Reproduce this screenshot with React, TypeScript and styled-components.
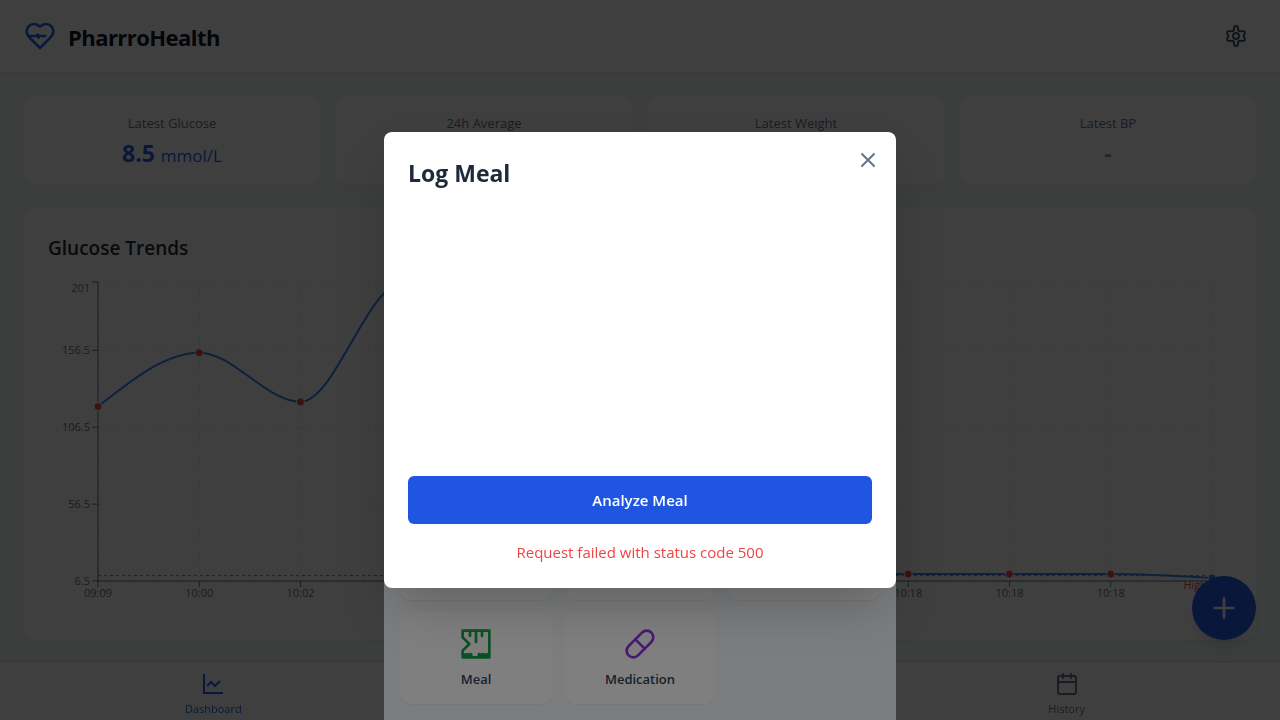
import React, { useLayoutEffect, useRef, useState } from 'react';
import styled, { createGlobalStyle } from 'styled-components';

const GlobalStyle = createGlobalStyle`
  *, *::before, *::after { box-sizing: border-box; }
  body {
    margin: 0;
    font-family: 'Segoe UI', 'Open Sans', 'Noto Sans', sans-serif;
    font-size: 15px;
    line-height: 24px;
    color: #0f172a;
    background: #f1f8f5;
  }
  h1, h2, h3, p { margin: 0; }
  button { font: inherit; border: 0; padding: 0; cursor: pointer; }
`;

const Page = styled.div`
  min-height: 100vh;
  display: flex;
  flex-direction: column;
`;

const Header = styled.header`
  display: flex;
  align-items: center;
  justify-content: space-between;
  height: 72px;
  padding: 0 24px;
  background: #fff;
  box-shadow: 0 1px 2px rgba(0, 0, 0, 0.06);
`;

const Brand = styled.div`
  display: flex;
  align-items: center;
  gap: 12px;
  color: #2563eb;
`;

const BrandName = styled.h1`
  padding-top: 2px;
  font-size: 22px;
  line-height: 32px;
  font-weight: 700;
  letter-spacing: -0.025em;
  color: #0f172a;
`;

const IconButton = styled.button`
  display: flex;
  padding: 8px;
  border-radius: 50%;
  background: transparent;
  color: #475569;
`;

const Main = styled.main`
  display: flex;
  flex-direction: column;
  gap: 24px;
  padding: 24px 24px 80px;
`;

const Stats = styled.section`
  display: grid;
  grid-template-columns: repeat(4, 1fr);
  gap: 16px;
`;

const Card = styled.section`
  background: #fff;
  border-radius: 12px;
  box-shadow: 0 1px 2px rgba(0, 0, 0, 0.05);
`;

const StatCard = styled(Card)`
  padding: 16px;
  text-align: center;
`;

const StatLabel = styled.p`
  font-size: 13px;
  line-height: 22px;
  color: #64748b;
`;

const StatValue = styled.p<{ $tone: string }>`
  margin-top: 4px;
  font-size: 23px;
  line-height: 30px;
  font-weight: 700;
  color: ${(p) => p.$tone};
`;

const StatUnit = styled.span`
  font-size: 17px;
  line-height: 20px;
  font-weight: 400;
`;

const ChartCard = styled(Card)`
  padding: 24px;
`;

const ChartTitle = styled.h2`
  margin-bottom: 12px;
  font-size: 19px;
  line-height: 32px;
  font-weight: 600;
  color: #1e293b;
`;

const ChartBox = styled.div`
  height: 340px;
  svg { display: block; width: 100%; height: 100%; }
  text { font-size: 11px; fill: #64748b; }
  text.limit { fill: #ef4444; }
`;

const Nav = styled.nav`
  position: fixed;
  inset: auto 0 0 0;
  display: grid;
  grid-template-columns: repeat(3, 1fr);
  padding: 9px 0 2px;
  border-top: 1px solid #e2e8f0;
  background: #fff;
  box-shadow: 0 -1px 3px rgba(0, 0, 0, 0.1);
`;

const NavItem = styled.a<{ $active?: boolean; $column: number }>`
  grid-column: ${(p) => p.$column};
  display: flex;
  flex-direction: column;
  align-items: center;
  gap: 4px;
  font-size: 11px;
  line-height: 18px;
  text-decoration: none;
  color: ${(p) => (p.$active ? '#2563eb' : '#64748b')};
`;

const AddButton = styled.button`
  position: fixed;
  right: 24px;
  bottom: 80px;
  display: flex;
  align-items: center;
  justify-content: center;
  width: 64px;
  height: 64px;
  border-radius: 50%;
  background: #2563eb;
  color: #fff;
  box-shadow: 0 10px 15px -3px rgba(0, 0, 0, 0.1), 0 4px 6px -4px rgba(0, 0, 0, 0.1);
`;

const Overlay = styled.div<{ $align: string }>`
  position: fixed;
  inset: 0;
  display: flex;
  align-items: ${(p) => p.$align};
  justify-content: center;
  background: rgba(0, 0, 0, 0.5);
`;

const Sheet = styled.div`
  display: grid;
  grid-template-columns: repeat(3, 1fr);
  gap: 12px;
  width: 100%;
  max-width: 512px;
  padding: 16px;
  border-radius: 16px 16px 0 0;
  background: #f8fafc;
`;

const SheetAction = styled.button<{ $tone?: string }>`
  display: flex;
  flex-direction: column;
  align-items: center;
  gap: 8px;
  min-height: 92px;
  padding: 16px 16px 14px;
  border-radius: 12px;
  background: #fff;
  color: ${(p) => p.$tone ?? '#2563eb'};
  box-shadow: 0 1px 2px rgba(0, 0, 0, 0.05);
`;

const ActionLabel = styled.span`
  font-size: 13px;
  line-height: 22px;
  font-weight: 600;
  color: #334155;
`;

const Modal = styled.div`
  position: relative;
  display: flex;
  flex-direction: column;
  width: 100%;
  max-width: 512px;
  padding: 24px;
  border-radius: 8px;
  background: #fff;
  box-shadow: 0 25px 50px -12px rgba(0, 0, 0, 0.25);
`;

const ModalTitle = styled.h2`
  font-size: 23px;
  line-height: 34px;
  font-weight: 700;
  color: #1e293b;
`;

const CloseButton = styled.button`
  position: absolute;
  top: 16px;
  right: 16px;
  display: flex;
  background: transparent;
  color: #64748b;
`;

const ModalContent = styled.div`
  height: 286px;
`;

const PrimaryButton = styled.button`
  height: 48px;
  border-radius: 6px;
  background: #1f55e0;
  color: #fff;
  font-weight: 600;
`;

const ErrorText = styled.p`
  margin-top: 16px;
  text-align: center;
  color: #ef4444;
`;

function Icon({ size = 24, children }: { size?: number; children: React.ReactNode }) {
  return (
    <svg width={size} height={size} viewBox="0 0 24 24" fill="none" stroke="currentColor"
      strokeWidth="2" strokeLinecap="round" strokeLinejoin="round" aria-hidden="true">
      {children}
    </svg>
  );
}

const HeartIcon = () => (
  <Icon size={32}>
    <path d="M19 14c1.49-1.46 3-3.21 3-5.5A5.5 5.5 0 0 0 16.5 3c-1.76 0-3 .5-4.5 2-1.5-1.5-2.74-2-4.5-2A5.5 5.5 0 0 0 2 8.5c0 2.3 1.5 4.05 3 5.5l7 7Z" />
    <path strokeWidth="1.8" d="M4 12h5.5l.8-.8.6 1.600.8-.8h4.300" />
    <path strokeWidth="1.8" d="M10.300 10.800v.7M10.900 12.500v.8" />
  </Icon>
);

const GearIcon = () => (
  <Icon>
    <path d="M12 2a2 2 0 0 0-2 2v1.300a2 2 0 0 1-2.400 2L5.400 7A1.900 1.900 0 0 0 3.200 9.500c.2.9 1.100 1.400 1.100 2.500s-.9 1.600-1.100 2.500a1.900 1.900 0 0 0 2.200 2.500l2.200-.3a2 2 0 0 1 2.400 2V20a2 2 0 0 0 4 0v-1.300a2 2 0 0 1 2.400-2l2.200.3a1.900 1.900 0 0 0 2.200-2.500c-.2-.9-1.100-1.400-1.100-2.500s.9-1.600 1.100-2.500A1.900 1.900 0 0 0 18.600 7l-2.200.3A2 2 0 0 1 14 5.300V4a2 2 0 0 0-2-2z" />
    <circle cx="12" cy="12" r="3" />
  </Icon>
);

const ChartIcon = () => (
  <Icon>
    <path strokeLinecap="butt" strokeLinejoin="miter" d="M3 2v19h19" />
    <path strokeLinecap="butt" strokeLinejoin="miter" d="m19 9-5 5-4-4-4 4" />
  </Icon>
);

const CalendarIcon = () => (
  <Icon>
    <rect x="3" y="4" width="18" height="18" rx="2" />
    <path d="M16 2v4M8 2v4M3 10h18" />
  </Icon>
);

const PlusIcon = () => (
  <Icon size={32}>
    <path d="M5 12h14M12 5v14" />
  </Icon>
);

const CloseIcon = () => (
  <Icon>
    <path d="M18 6 6 18M6 6l12 12" />
  </Icon>
);

const MealIcon = () => (
  <Icon size={32}>
    <path d="M2 22v-5l5-5-5-5V2h20v20H2" />
    <path d="M7.500 2v4M12 2v8.500M16.500 2v4" />
    <path strokeWidth="2.400" d="M2.500 19.800l1.500.8 1.500-.8 1.500.8 1.200-.8v1.700M14.300 21.500v-1.700l1.200.8 1.500-.8 1.500.8 1.500-.8 1.500.8" />
  </Icon>
);

const PillIcon = () => (
  <Icon size={32}>
    <path d="m10.5 20.5 10-10a4.95 4.95 0 1 0-7-7l-10 10a4.95 4.95 0 1 0 7 7Z" />
    <path d="m8.5 8.5 7 7" />
  </Icon>
);

const HIGH_LIMIT = 10;
const DOMAIN: [number, number] = [6.5, 201];
const Y_TICKS = [201, 156.5, 106.5, 56.5, 6.5];
const READINGS = [
  { time: '09:09', value: 120 },
  { time: '10:00', value: 155 },
  { time: '10:02', value: 123 },
  { time: '', value: 200 },
  { time: '', value: 11 },
  { time: '', value: 11 },
  { time: '', value: 11 },
  { time: '', value: 11 },
  { time: '10:18', value: 11 },
  { time: '10:18', value: 11 },
  { time: '10:18', value: 11 },
  { time: '', value: 8.5 },
];

type Point = { x: number; y: number };

/* Cubic curve that never overshoots between neighbouring points. */
function monotonePath(points: Point[]): string {
  const last = points.length - 1;
  const slopes = points.slice(1).map((p, i) => (p.y - points[i].y) / (p.x - points[i].x));
  const tangents = points.map((_, i) => {
    if (i === 0 || i === last) return 0;
    const a = slopes[i - 1];
    const b = slopes[i];
    if (a * b <= 0) return 0;
    return Math.sign(a) * Math.min(Math.abs(a), Math.abs(b), Math.abs(a + b) / 4) * 2;
  });
  tangents[0] = (3 * slopes[0] - tangents[1]) / 2;
  tangents[last] = (3 * slopes[last - 1] - tangents[last - 1]) / 2;
  return points.slice(1).reduce((d, p, i) => {
    const from = points[i];
    const third = (p.x - from.x) / 3;
    return `${d}C${from.x + third},${from.y + tangents[i] * third} ${p.x - third},${p.y - tangents[i + 1] * third} ${p.x},${p.y}`;
  }, `M${points[0].x},${points[0].y}`);
}

function GlucoseChart() {
  const box = useRef<HTMLDivElement>(null);
  const [width, setWidth] = useState(1184);

  useLayoutEffect(() => {
    const node = box.current;
    if (!node) return;
    const measure = () => setWidth(node.clientWidth);
    measure();
    const observer = new ResizeObserver(measure);
    observer.observe(node);
    return () => observer.disconnect();
  }, []);

  const left = 50;
  const right = width - 20;
  const top = 6;
  const bottom = 305;
  const x = (i: number) => left + ((right - left) * i) / (READINGS.length - 1);
  const y = (v: number) => bottom - ((bottom - top) * (v - DOMAIN[0])) / (DOMAIN[1] - DOMAIN[0]);
  const points = READINGS.map((r, i) => ({ x: x(i), y: y(r.value) }));

  return (
    <ChartBox ref={box}>
      <svg role="img" aria-label="Glucose readings over time">
        <g stroke="#e2e8f0" strokeDasharray="3 3">
          {Y_TICKS.map((v) => <line key={v} x1={left} x2={right} y1={y(v)} y2={y(v)} />)}
          {READINGS.map((_, i) => <line key={i} x1={x(i)} x2={x(i)} y1={top} y2={bottom} />)}
        </g>
        <g stroke="#64748b">
          <line x1={left} x2={right} y1={bottom} y2={bottom} />
          <line x1={left} x2={left} y1={top} y2={bottom} />
          {Y_TICKS.map((v) => <line key={v} x1={left - 6} x2={left} y1={y(v)} y2={y(v)} />)}
          {READINGS.map((_, i) => <line key={i} x1={x(i)} x2={x(i)} y1={bottom} y2={bottom + 6} />)}
        </g>
        {Y_TICKS.map((v) => (
          <text key={v} x={left - 8} y={Math.max(y(v), 12) + 4} textAnchor="end">{v}</text>
        ))}
        {READINGS.map((r, i) => r.time && (
          <text key={i} x={x(i)} y={bottom + 16} textAnchor="middle">{r.time}</text>
        ))}
        <line x1={left} x2={right} y1={y(HIGH_LIMIT)} y2={y(HIGH_LIMIT)} stroke="#ef4444" strokeDasharray="3 3" />
        <path d={monotonePath(points)} fill="none" stroke="#3b82f6" strokeWidth="2" />
        {points.map((p, i) => (
          <circle key={i} cx={p.x} cy={p.y} r="4" stroke="#fff"
            fill={READINGS[i].value > HIGH_LIMIT ? '#ef4444' : '#3b82f6'} />
        ))}
        <text className="limit" x={right - 5} y={y(HIGH_LIMIT) + 13} textAnchor="end">High</text>
      </svg>
    </ChartBox>
  );
}

export default function App() {
  return (
    <>
      <GlobalStyle />
      <Page>
        <Header>
          <Brand>
            <HeartIcon />
            <BrandName>PharrroHealth</BrandName>
          </Brand>
          <IconButton aria-label="Settings"><GearIcon /></IconButton>
        </Header>
        <Main>
          <Stats>
            <StatCard>
              <StatLabel>Latest Glucose</StatLabel>
              <StatValue $tone="#2563eb">8.5 <StatUnit>mmol/L</StatUnit></StatValue>
            </StatCard>
            <StatCard><StatLabel>24h Average</StatLabel></StatCard>
            <StatCard><StatLabel>Latest Weight</StatLabel></StatCard>
            <StatCard>
              <StatLabel>Latest BP</StatLabel>
              <StatValue $tone="#94a3b8">-</StatValue>
            </StatCard>
          </Stats>
          <ChartCard>
            <ChartTitle>Glucose Trends</ChartTitle>
            <GlucoseChart />
          </ChartCard>
        </Main>
        <Nav>
          <NavItem href="#dashboard" $active $column={1}><ChartIcon />Dashboard</NavItem>
          <NavItem href="#history" $column={3}><CalendarIcon />History</NavItem>
        </Nav>
        <AddButton aria-label="Add entry"><PlusIcon /></AddButton>
      </Page>

      <Overlay $align="flex-end">
        <Sheet>
          <SheetAction aria-label="Glucose" />
          <SheetAction aria-label="Weight" />
          <SheetAction aria-label="Blood pressure" />
          <SheetAction $tone="#16a34a"><MealIcon /><ActionLabel>Meal</ActionLabel></SheetAction>
          <SheetAction $tone="#9333ea"><PillIcon /><ActionLabel>Medication</ActionLabel></SheetAction>
        </Sheet>
      </Overlay>

      <Overlay $align="center">
        <Modal role="dialog" aria-modal="true" aria-labelledby="log-meal-title">
          <ModalTitle id="log-meal-title">Log Meal</ModalTitle>
          <CloseButton aria-label="Close"><CloseIcon /></CloseButton>
          <ModalContent />
          <PrimaryButton>Analyze Meal</PrimaryButton>
          <ErrorText role="alert">Request failed with status code 500</ErrorText>
        </Modal>
      </Overlay>
    </>
  );
}
